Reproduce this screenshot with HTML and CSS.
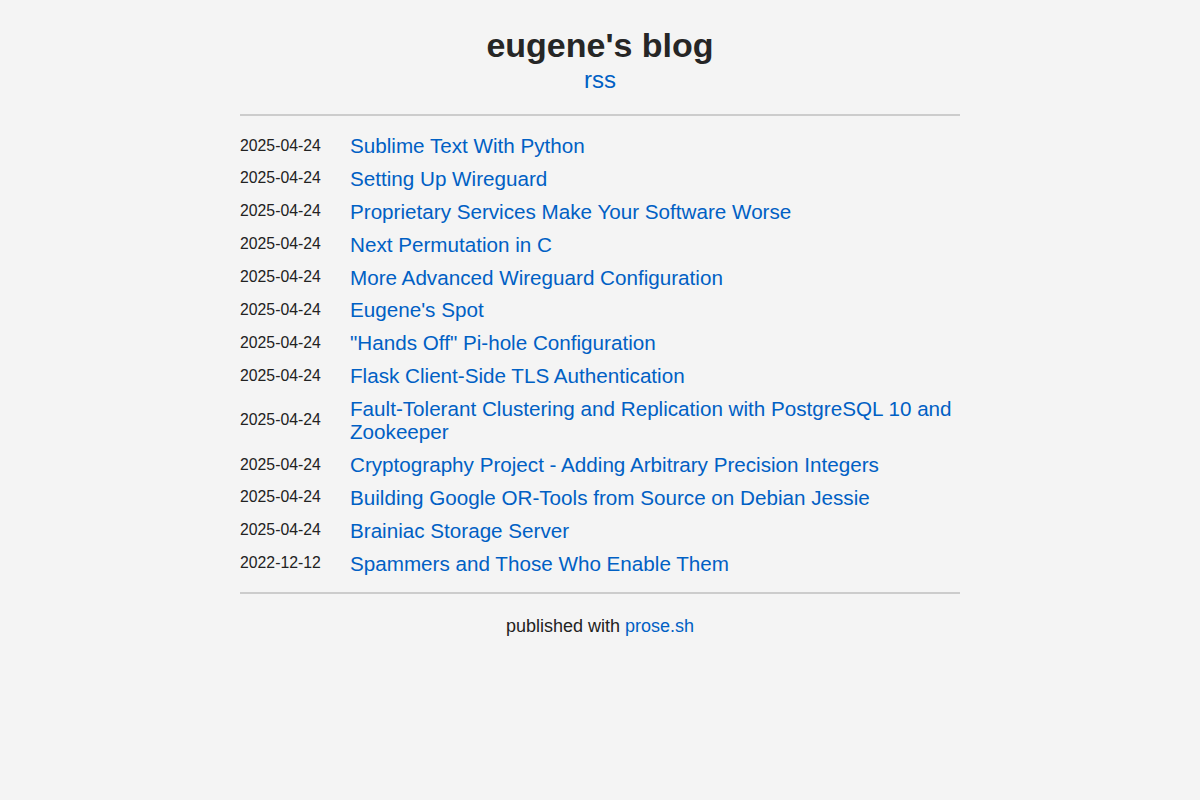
FILE: index.html
```html
<!DOCTYPE html>
<html lang="en">
<head>
<meta charset="utf-8">
<title>eugene's blog</title>
<link rel="stylesheet" href="styles.css">
</head>
<body>
<main class="page">
  <header class="masthead">
    <h1 class="title">eugene's blog</h1>
    <a class="rss" href="#">rss</a>
  </header>
  <hr class="rule">
  <ul class="posts">
    <li class="post"><time class="date">2025-04-24</time><a class="post-link" href="#">Sublime Text With Python</a></li>
    <li class="post"><time class="date">2025-04-24</time><a class="post-link" href="#">Setting Up Wireguard</a></li>
    <li class="post"><time class="date">2025-04-24</time><a class="post-link" href="#">Proprietary Services Make Your Software Worse</a></li>
    <li class="post"><time class="date">2025-04-24</time><a class="post-link" href="#">Next Permutation in C</a></li>
    <li class="post"><time class="date">2025-04-24</time><a class="post-link" href="#">More Advanced Wireguard Configuration</a></li>
    <li class="post"><time class="date">2025-04-24</time><a class="post-link" href="#">Eugene's Spot</a></li>
    <li class="post"><time class="date">2025-04-24</time><a class="post-link" href="#">"Hands Off" Pi-hole Configuration</a></li>
    <li class="post"><time class="date">2025-04-24</time><a class="post-link" href="#">Flask Client-Side TLS Authentication</a></li>
    <li class="post"><time class="date">2025-04-24</time><a class="post-link" href="#">Fault-Tolerant Clustering and Replication with PostgreSQL 10 and Zookeeper</a></li>
    <li class="post"><time class="date">2025-04-24</time><a class="post-link" href="#">Cryptography Project - Adding Arbitrary Precision Integers</a></li>
    <li class="post"><time class="date">2025-04-24</time><a class="post-link" href="#">Building Google OR-Tools from Source on Debian Jessie</a></li>
    <li class="post"><time class="date">2025-04-24</time><a class="post-link" href="#">Brainiac Storage Server</a></li>
    <li class="post"><time class="date">2022-12-12</time><a class="post-link" href="#">Spammers and Those Who Enable Them</a></li>
  </ul>
  <hr class="rule rule-end">
  <footer class="footer">published with <a href="#">prose.sh</a></footer>
</main>
</body>
</html>
```

FILE: styles.css
```css
html, body {
  margin: 0;
  padding: 0;
}

body {
  background: #f4f4f4;
  color: #222;
  font-family: "Liberation Sans", Arial, sans-serif;
}

a {
  color: #0060c4;
  text-decoration: none;
}

.page {
  width: 720px;
  margin: 0 auto;
  padding-top: 26px;
}

.masthead {
  display: flex;
  flex-direction: column;
  align-items: center;
}

.title {
  margin: 0;
  font-size: 34px;
  line-height: 39px;
  font-weight: bold;
  color: #262626;
}

.rss {
  font-size: 24px;
  line-height: 29px;
}

.rule {
  margin: 20px 0 0;
  border: 0;
  border-top: 2px solid #cccccc;
  height: 0;
}

.posts {
  list-style: none;
  margin: 18px 0 0;
  padding: 0;
  display: flex;
  flex-direction: column;
  gap: 9.9px;
}

.post {
  display: flex;
  align-items: center;
}

.date {
  flex: 0 0 110px;
  font-size: 15.8px;
}

.post-link {
  font-size: 20.65px;
  line-height: 23px;
}

.rule-end {
  margin-top: 17px;
}

.footer {
  text-align: center;
  font-size: 18px;
  padding-top: 22px;
}
```
